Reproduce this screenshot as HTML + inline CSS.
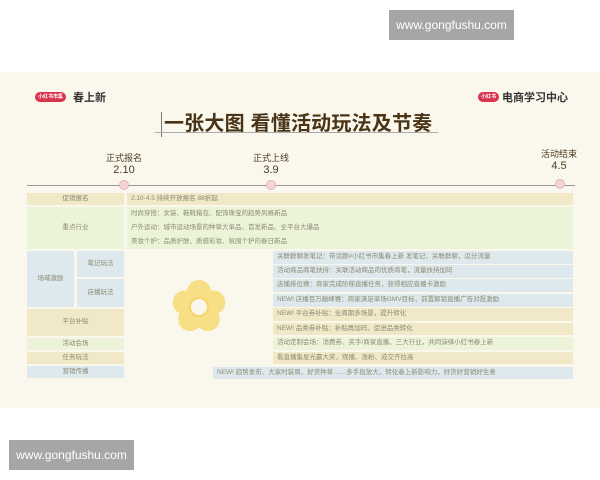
<!DOCTYPE html>
<html><head><meta charset="utf-8"><style>
*{margin:0;padding:0;box-sizing:border-box}
body{width:600px;height:480px;background:#fff;position:relative;overflow:hidden;font-family:"Liberation Sans","Noto Sans CJK SC",sans-serif}
.a{position:absolute}
.bg{left:0;top:72px;width:600px;height:336px;background:#faf8ec}
.wm{background:#a6a6a6;color:#fff;font-size:12px;line-height:30px;text-align:center;width:125px;height:30px}
.c{position:absolute;font-size:6.5px;color:#8d8a76;line-height:1;display:flex;align-items:center;padding-left:4px;white-space:nowrap}
.cc{justify-content:center;padding-left:0}
.y{background:#f0e8c6}.g{background:#ebf4d8}.b{background:#dde9ec}
.tag{background:#d8344e;color:#fff;font-size:5px;border-radius:6px;height:10px;line-height:10px;padding:0 3px;font-weight:bold}
.lab{color:#4e3a22;font-size:9px;text-align:center;line-height:12px;width:60px}
.lab b{font-weight:normal;font-size:11px}
.dot{width:10px;height:10px;border-radius:50%;background:#f4d4d8;border:1px solid #e6b4bc}
</style></head><body>
<div class="a bg"></div>
<div class="a wm" style="left:389px;top:10px">www.gongfushu.com</div>
<div class="a wm" style="left:9px;top:440px">www.gongfushu.com</div>

<div class="a tag" style="left:35px;top:92px">小红书市集</div>
<div class="a" style="left:73px;top:89px;font-size:11px;font-weight:bold;color:#333">春上新</div>
<div class="a tag" style="left:478px;top:92px">小红书</div>
<div class="a" style="left:502px;top:89px;font-size:11px;font-weight:bold;color:#333">电商学习中心</div>

<div class="a" style="left:161px;top:112px;width:1px;height:25px;background:#777"></div>
<div class="a" style="left:164px;top:107px;font-size:20px;font-weight:bold;color:#4a3418;letter-spacing:0.2px">一张大图 看懂活动玩法及节奏</div>
<div class="a" style="left:155px;top:132px;width:283px;height:1px;background:#aaa"></div>

<div class="a lab" style="left:94px;top:152px">正式报名<br><b>2.10</b></div>
<div class="a lab" style="left:241px;top:152px">正式上线<br><b>3.9</b></div>
<div class="a lab" style="left:529px;top:148px">活动结束<br><b>4.5</b></div>
<div class="a" style="left:27px;top:185px;width:548px;height:1px;background:#999"></div>
<div class="a dot" style="left:119px;top:180px"></div>
<div class="a dot" style="left:266px;top:180px"></div>
<div class="a dot" style="left:555px;top:179px"></div>

<div class="c cc y" style="left:27px;top:193px;width:97px;height:12px">促销报名</div>
<div class="c y" style="left:127px;top:193px;width:446px;height:12px">2.10-4.5 持续开放报名 88折起</div>
<div class="c cc g" style="left:27px;top:207px;width:97px;height:42px">重点行业</div>
<div class="c g" style="left:127px;top:207px;width:446px;height:42px;flex-direction:column;align-items:flex-start;justify-content:space-around">
<span>时尚穿搭：女装、鞋靴箱包、配饰珠宝的趋势风格新品</span>
<span>户外运动：城市运动场景的种草大单品、首发新品、全平台大爆品</span>
<span>美妆个护：品质护肤、质感彩妆、氛围个护的春日新品</span></div>
<div class="c cc b" style="left:27px;top:251px;width:47px;height:56px">场域激励</div>
<div class="c cc b" style="left:77px;top:251px;width:47px;height:26px">笔记玩法</div>
<div class="c cc b" style="left:77px;top:279px;width:47px;height:28px">店播玩法</div>
<div class="c b" style="left:273px;top:251px;width:300px;height:13px">关联群聊发笔记：带话题#小红书市集春上新 发笔记，关联群聊，瓜分流量</div>
<div class="c b" style="left:273px;top:265px;width:300px;height:13px">活动商品商笔扶持：关联活动商品的优质商笔，流量扶持加码</div>
<div class="c b" style="left:273px;top:279px;width:300px;height:13px">店播排位赛：商家完成阶梯直播任务，获得相应直播卡激励</div>
<div class="c b" style="left:273px;top:294px;width:300px;height:13px">NEW! 店播百万巅峰赛：商家满足单场GMV目标，前置解锁直播广告对投激励</div>
<div class="c cc y" style="left:27px;top:309px;width:97px;height:27px">平台补贴</div>
<div class="c y" style="left:273px;top:308px;width:300px;height:13px">NEW! 平台券补贴：全周期多场景，提升转化</div>
<div class="c y" style="left:273px;top:323px;width:300px;height:12px">NEW! 品类券补贴：补贴再加码，促进品类转化</div>
<div class="c cc g" style="left:27px;top:338px;width:97px;height:12px">活动会场</div>
<div class="c g" style="left:273px;top:337px;width:300px;height:13px">活动定制会场：消费券、买手/商家直播、三大行业，共同演绎小红书春上新</div>
<div class="c cc y" style="left:27px;top:352px;width:97px;height:12px">任务玩法</div>
<div class="c y" style="left:273px;top:352px;width:300px;height:12px">看直播集星光赢大奖，观播、涨粉、成交齐拉高</div>
<div class="c cc b" style="left:27px;top:366px;width:97px;height:12px">营销传播</div>
<div class="c b" style="left:213px;top:367px;width:360px;height:12px">NEW! 趋势发布、大家时装周、好货种草……多手段放大，转化春上新影响力，好货好营销好生意</div>

<svg class="a" style="left:172px;top:280px" width="54" height="54" viewBox="0 0 54 54">
<g fill="#f7df86">
<circle cx="27" cy="12" r="12"/><circle cx="41.3" cy="22.4" r="12"/><circle cx="35.8" cy="39.1" r="12"/><circle cx="18.2" cy="39.1" r="12"/><circle cx="12.7" cy="22.4" r="12"/>
<circle cx="27" cy="27" r="17"/></g>
<circle cx="27" cy="27" r="10" fill="#f4ca50" opacity="0.5"/>
<circle cx="27" cy="27" r="8" fill="#faf8ec"/>
</svg>
</body></html>
